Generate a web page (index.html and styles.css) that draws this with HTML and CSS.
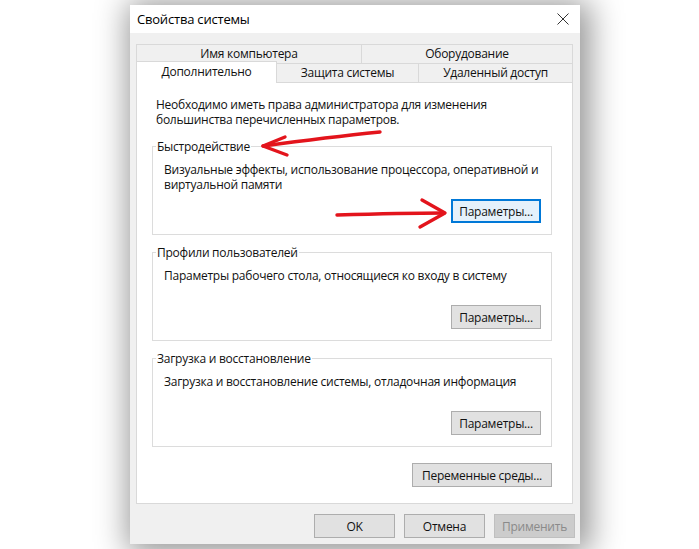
FILE: index.html
```html
<!DOCTYPE html>
<html>
<head>
    <meta charset="utf-8">
    <title>Свойства системы</title>
    <link rel="stylesheet" href="styles.css">
</head>
<body>

    <div class="dialog">
        <div class="titlebar">
            <span class="title">Свойства системы</span>
            <svg class="close" width="12" height="12" viewBox="0 0 12 12">
                <path d="M0.5 0.5L11.5 11.5M11.5 0.5L0.5 11.5" stroke="#333" stroke-width="1" fill="none"/>
            </svg>
        </div>

        <div class="dialog-body">
            <div class="tabs">
                <div class="tab-row tab-row-top">
                    <div class="tab tab-name">Имя компьютера</div>
                    <div class="tab tab-fill">Оборудование</div>
                </div>
                <div class="tab-row tab-row-bottom">
                    <div class="tab tab-extra active">Дополнительно</div>
                    <div class="tab tab-protect">Защита системы</div>
                    <div class="tab tab-fill">Удаленный доступ</div>
                </div>
            </div>

            <div class="panel">
                <p class="note">Необходимо иметь права администратора для изменения<br>большинства перечисленных параметров.</p>

                <fieldset class="group group-first">
                    <legend>Быстродействие</legend>
                    <div class="group-text">Визуальные эффекты, использование процессора, оперативной и<br>виртуальной памяти</div>
                    <div class="group-actions">
                        <button class="btn btn-focus">Параметры...</button>
                    </div>
                </fieldset>

                <fieldset class="group">
                    <legend>Профили пользователей</legend>
                    <div class="group-text">Параметры рабочего стола, относящиеся ко входу в систему</div>
                    <div class="group-actions">
                        <button class="btn">Параметры...</button>
                    </div>
                </fieldset>

                <fieldset class="group">
                    <legend>Загрузка и восстановление</legend>
                    <div class="group-text">Загрузка и восстановление системы, отладочная информация</div>
                    <div class="group-actions">
                        <button class="btn">Параметры...</button>
                    </div>
                </fieldset>

                <div class="env-row">
                    <button class="btn btn-env">Переменные среды...</button>
                </div>
            </div>

            <div class="footer">
                <button class="btn btn-footer">OK</button>
                <button class="btn btn-footer">Отмена</button>
                <button class="btn btn-footer" disabled>Применить</button>
            </div>
        </div>
    </div>

    <!-- red hand-drawn pointers on top of the dialog -->
    <svg class="marks" width="699" height="549" viewBox="0 0 699 549">
        <g stroke="#e3141c" stroke-width="3.4" stroke-linecap="round" stroke-linejoin="round" fill="none">
            <path d="M380 132 C340 136 300 141 263 146"/>
            <path d="M285 137 L263 146 L287 155"/>
            <path d="M337 215 C370 214 410 213 444 213"/>
            <path d="M422 200 L445 213 L420 227"/>
        </g>
    </svg>

</body>
</html>
```

FILE: styles.css
```css
body {
    margin: 0;
    width: 699px;
    height: 549px;
    overflow: hidden;
    position: relative;
    background-color: #fff;
    font-family: "Open Sans", "Noto Sans", sans-serif;
    font-size: 12px;
    letter-spacing: -0.25px;
    color: #111;
}

.dialog {
    margin: 5px 0 0 130px;
    width: 450px;
    height: 539px;
    background-color: #f0f0f0;
    box-shadow: 4px 3px 30px 6px rgba(0, 0, 0, 0.42);
    display: flex;
    flex-direction: column;
}

.titlebar {
    height: 28px;
    flex-shrink: 0;
    background-color: #fff;
    display: flex;
    align-items: center;
    justify-content: space-between;
    padding: 0 11px 0 7px;
}

.title {
    font-size: 13px;
    letter-spacing: -0.2px;
    color: #000;
}

.dialog-body {
    padding: 11px 7px 0 6px;
}

/* tabs */
.tab-row {
    display: flex;
    align-items: flex-start;
}

.tab-row-bottom {
    margin-top: -1px;
}

.tab {
    box-sizing: border-box;
    height: 20px;
    line-height: 18px;
    text-align: center;
    border: 1px solid #d9d9d9;
    background-color: #f0f0f0;
    margin-left: -1px;
    white-space: nowrap;
}

.tab:first-child {
    margin-left: 0;
}

.tab-name {
    width: 226px;
}

.tab-extra {
    width: 141px;
}

.tab-protect {
    width: 143px;
}

.tab-fill {
    flex: 1;
}

.tab.active {
    position: relative;
    z-index: 1;
    height: 22px;
    margin-top: -2px;
    line-height: 19px;
    background-color: #fff;
    border-bottom: none;
}

/* white page under the tabs */
.panel {
    margin-top: -1px;
    background-color: #fff;
    border: 1px solid #d9d9d9;
    padding: 14px 20px 16px 15px;
}

.note {
    margin: 0;
    padding-left: 4px;
    line-height: 15px;
}

.group {
    margin: 10px 0 0 0;
    padding: 0 10px 11px 3px;
    border: 1px solid #dcdcdc;
}

.group-first {
    margin-top: 12px;
}

.group legend {
    padding: 0 1px;
    line-height: 15px;
}

.group-text {
    margin-top: 8px;
    padding-left: 8px;
    line-height: 15px;
    min-height: 30px;
    white-space: nowrap;
}

.group-actions {
    margin-top: 7px;
    display: flex;
    justify-content: flex-end;
}

.btn {
    box-sizing: border-box;
    height: 24px;
    width: 90px;
    padding: 0;
    font-family: inherit;
    font-size: 12px;
    letter-spacing: -0.25px;
    color: #111;
    background-color: #e1e1e1;
    border: 1px solid #adadad;
}

.btn-focus {
    background-color: #e5f1fb;
    border: 2px solid #0078d7;
}

.env-row {
    margin-top: 16px;
    display: flex;
    justify-content: flex-end;
}

.btn-env {
    width: 140px;
}

.footer {
    margin: 10px -2px 0 0;
    display: flex;
    justify-content: flex-end;
    gap: 9px;
}

.btn-footer {
    width: 81px;
}

.btn:disabled {
    background-color: #cccccc;
    border-color: #bfbfbf;
    color: #8a8a8a;
}

.marks {
    position: absolute;
    left: 0;
    top: 0;
    pointer-events: none;
}
```
